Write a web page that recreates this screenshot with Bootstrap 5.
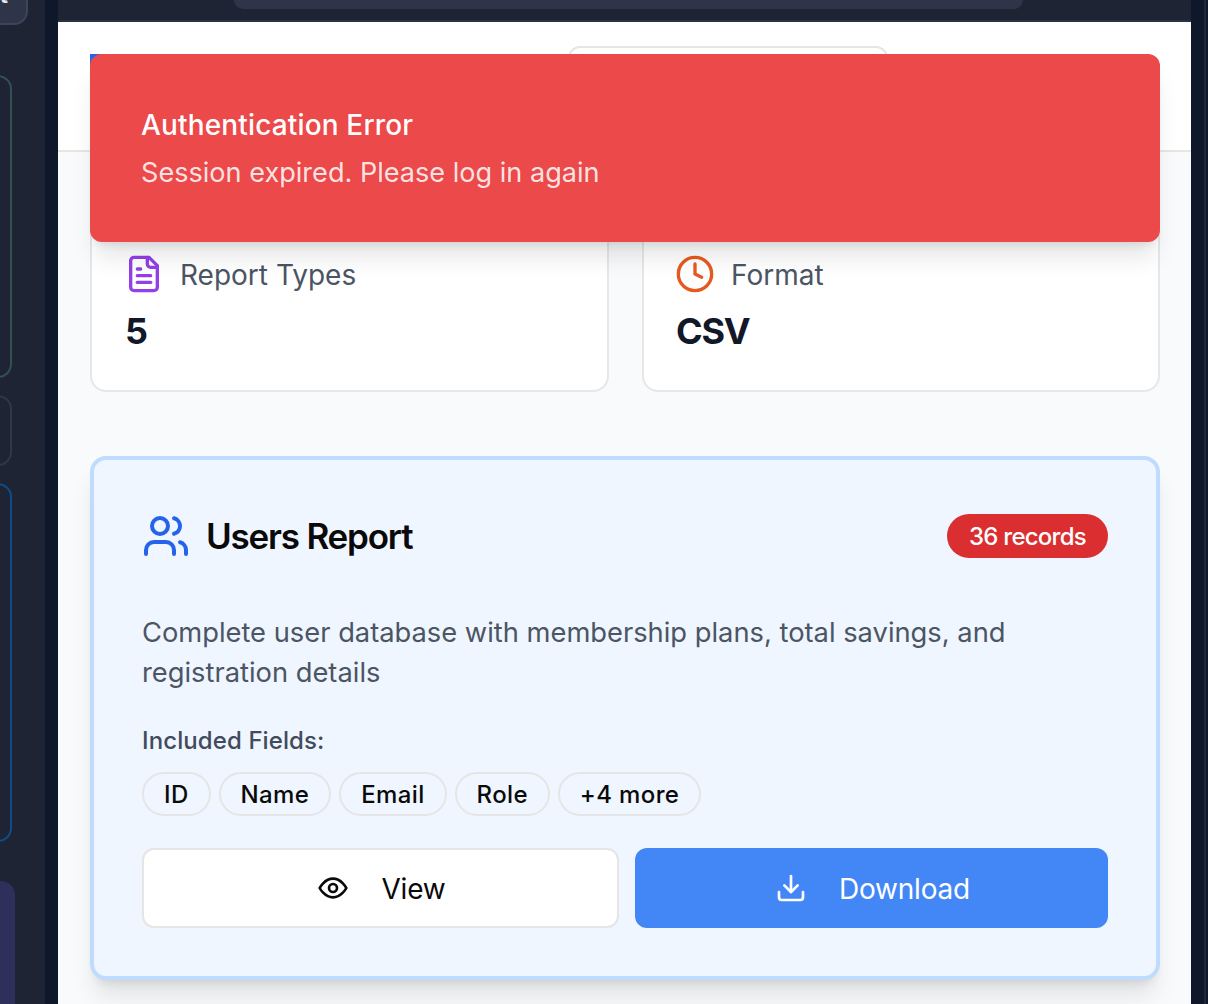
<!DOCTYPE html>
<html lang="en">
<head>
<meta charset="utf-8">
<title>Users Report</title>
<link href="https://cdn.jsdelivr.net/npm/bootstrap@5.3.0/dist/css/bootstrap.min.css" rel="stylesheet">
<style>
html,body{height:1004px;overflow:hidden;}
body{font-family:Inter,"Liberation Sans",sans-serif;background:#0f172a;}
.app-shell{height:1004px;width:1208px;position:relative;}
.side-rail{width:45px;background:#1e2433;overflow:hidden;flex:none;}
.rail-gap{width:13px;background:#0f172a;flex:none;}
.rail-box{margin-left:-40px;border:2px solid #2f3848;border-radius:14px;}
.rail-top{width:68px;height:43px;margin-top:-18px;background:#2f3549;border-color:#3d4559;color:#e5e7eb;font-size:24px;font-weight:600;line-height:1;padding-right:18px;display:flex;align-items:flex-end;justify-content:flex-end;padding-bottom:16px;}
.rail-a{width:52px;height:303px;margin-top:50px;border-color:#35504f;}
.rail-b{width:52px;height:71px;margin-top:17px;}
.rail-c{width:52px;height:359px;margin-top:17px;border-color:#0f4c8a;}
.rail-d{width:55px;height:160px;margin-top:39px;background:#2e2f5a;border:0;}
.main-pane{width:1133px;flex:none;background:#f9fafb;overflow:hidden;}
.end-rail{width:17px;flex:none;background:#0f172a;}
.end-line{width:2px;background:#1e293b;margin-left:13px;height:100%;}
.top-strip{height:22px;background:#1e2433;border-bottom:2px solid #2a3142;padding-left:176px;}
.search-pill{width:789px;height:9px;background:#2f3549;border-radius:0 0 10px 10px;}
.page-head{height:130px;background:#fff;border-bottom:2px solid #e8e6e3;padding:24px 32px 0;position:relative;}
.head-mark{width:40px;height:40px;background:#2563eb;margin-top:8px;}
.head-select{width:320px;height:60px;margin-left:438px;border:2px solid #e5e5e5;border-radius:12px;background:#fff;}
.page-body{padding:32px 31px 0 32px;}
.stat-row{display:grid;grid-template-columns:519px 518px;gap:33px;margin-bottom:64px;}
.stat-box{height:208px;border:2px solid #e5e7eb;border-radius:16px;padding:68px 32px 0;background:#fff;}
.stat-box-alt{padding-left:31px;}
.stat-label{font-size:28px;line-height:38px;color:#4b5563;font-weight:400;padding-top:2px;}
.stat-value{font-size:36px;line-height:40px;font-weight:700;color:#111827;margin-top:17px;padding-left:1px;letter-spacing:-1.2px;}
.report-box{height:524px;border:4px solid #bfdbfe;border-radius:16px;background:#eff6ff;padding:52px 48px 0;box-shadow:0 20px 25px -5px rgba(0,0,0,.1),0 8px 10px -6px rgba(0,0,0,.1);}
.report-title{font-size:35px;line-height:48px;font-weight:600;color:#0a0a0a;letter-spacing:-1.2px;margin:0;}
.rec-pill{background:#da2e30;color:#fff;height:44px;width:161px;font-size:24px;font-weight:500;letter-spacing:-.75px;border-radius:22px;padding:2px 0 0;display:flex;align-items:center;justify-content:center;}
.report-desc{font-size:27.3px;line-height:40px;color:#4b5563;margin:53px 0 0;}
.field-label{font-size:24px;line-height:32px;font-weight:500;color:#414b5c;margin-top:32px;letter-spacing:.1px;}
.field-chip{height:44px;border:2px solid #e5e5e5;border-radius:22px;padding:2px 20px 0;font-size:24px;font-weight:500;letter-spacing:.36px;color:#0a0a0a;display:flex;align-items:center;}
.field-row{margin-top:15px;}
.act-btn{height:80px;font-size:28px;font-weight:400;letter-spacing:-.2px;border-radius:12px;display:flex;align-items:center;justify-content:center;gap:32px;padding:0 0 0 2px;}
.act-btn span{padding-top:1px;}
.act-view{width:477px;background:#fff;border:2px solid #e5e5e5;color:#0a0a0a;}
.act-down{width:473px;background:#4287f5;border:0;color:#fff;}
.error-toast{position:absolute;left:90px;top:54px;width:1070px;height:188px;background:#eb494a;border-radius:12px;padding:51px 51px 0;color:#fff;box-shadow:0 20px 25px -5px rgba(0,0,0,.1),0 8px 10px -6px rgba(0,0,0,.1);}
.toast-head{font-size:28px;line-height:40px;font-weight:500;letter-spacing:.15px;}
.toast-text{font-size:27.1px;line-height:40px;margin-top:8px;color:rgba(255,255,255,.85);}
</style>
</head>
<body>
<div class="app-shell d-flex">
  <aside class="side-rail">
    <div class="rail-box rail-top">t</div>
    <div class="rail-box rail-a"></div>
    <div class="rail-box rail-b"></div>
    <div class="rail-box rail-c"></div>
    <div class="rail-box rail-d"></div>
  </aside>
  <div class="rail-gap"></div>
  <main class="main-pane">
    <div class="top-strip"><div class="search-pill"></div></div>
    <header class="page-head d-flex align-items-start">
      <div class="head-mark"></div>
      <div class="head-select"></div>
    </header>
    <div class="page-body">
      <div class="stat-row">
        <div class="stat-box">
          <div class="d-flex align-items-center gap-3">
            <svg width="40" height="40" viewBox="0 0 24 24" fill="none" stroke="#9140ea" stroke-width="2" stroke-linecap="round" stroke-linejoin="round"><path d="M15 2H6a2 2 0 0 0-2 2v16a2 2 0 0 0 2 2h12a2 2 0 0 0 2-2V7Z"/><path d="M14 2v4a2 2 0 0 0 2 2h4"/><path d="M10 9H8"/><path d="M16 13H8"/><path d="M16 17H8"/></svg>
            <span class="stat-label">Report Types</span>
          </div>
          <div class="stat-value">5</div>
        </div>
        <div class="stat-box stat-box-alt">
          <div class="d-flex align-items-center gap-3">
            <svg width="40" height="40" viewBox="0 0 24 24" fill="none" stroke="#e8591f" stroke-width="2" stroke-linecap="round" stroke-linejoin="round"><circle cx="12" cy="12" r="10"/><polyline points="12 6 12 12 16 14"/></svg>
            <span class="stat-label">Format</span>
          </div>
          <div class="stat-value">CSV</div>
        </div>
      </div>
      <section class="report-box">
        <div class="d-flex align-items-center justify-content-between">
          <div class="d-flex align-items-center gap-3">
            <svg width="48" height="48" viewBox="0 0 24 24" fill="none" stroke="#2563eb" stroke-width="2" stroke-linecap="round" stroke-linejoin="round"><path d="M16 21v-2a4 4 0 0 0-4-4H6a4 4 0 0 0-4 4v2"/><circle cx="9" cy="7" r="4"/><path d="M22 21v-2a4 4 0 0 0-3-3.87"/><path d="M16 3.13a4 4 0 0 1 0 7.75"/></svg>
            <h3 class="report-title">Users Report</h3>
          </div>
          <span class="badge rec-pill">36 records</span>
        </div>
        <p class="report-desc">Complete user database with membership plans, total savings, and registration details</p>
        <div class="field-label">Included Fields:</div>
        <div class="d-flex gap-2 field-row">
          <span class="field-chip">ID</span>
          <span class="field-chip">Name</span>
          <span class="field-chip">Email</span>
          <span class="field-chip">Role</span>
          <span class="field-chip">+4 more</span>
        </div>
        <div class="d-flex gap-3 mt-4 pt-2">
          <button class="btn act-btn act-view" type="button">
            <svg width="32" height="32" viewBox="0 0 24 24" fill="none" stroke="currentColor" stroke-width="2" stroke-linecap="round" stroke-linejoin="round"><path d="M2 12s3.600-7 10-7 10 7 10 7-3.600 7-10 7-10-7-10-7Z"/><circle cx="12" cy="12" r="3"/></svg>
            <span>View</span>
          </button>
          <button class="btn act-btn act-down" type="button">
            <svg width="32" height="32" viewBox="0 0 24 24" fill="none" stroke="currentColor" stroke-width="2" stroke-linecap="round" stroke-linejoin="round"><path d="M21 15v4a2 2 0 0 1-2 2H5a2 2 0 0 1-2-2v-4"/><polyline points="7 10 12 15 17 10"/><line x1="12" y1="15" x2="12" y2="3"/></svg>
            <span>Download</span>
          </button>
        </div>
      </section>
    </div>
  </main>
  <div class="end-rail"><div class="end-line"></div></div>
  <div class="error-toast" role="alert">
    <div class="toast-head">Authentication Error</div>
    <div class="toast-text">Session expired. Please log in again</div>
  </div>
</div>
<script src="https://cdn.jsdelivr.net/npm/bootstrap@5.3.0/dist/js/bootstrap.bundle.min.js"></script>
</body>
</html>
